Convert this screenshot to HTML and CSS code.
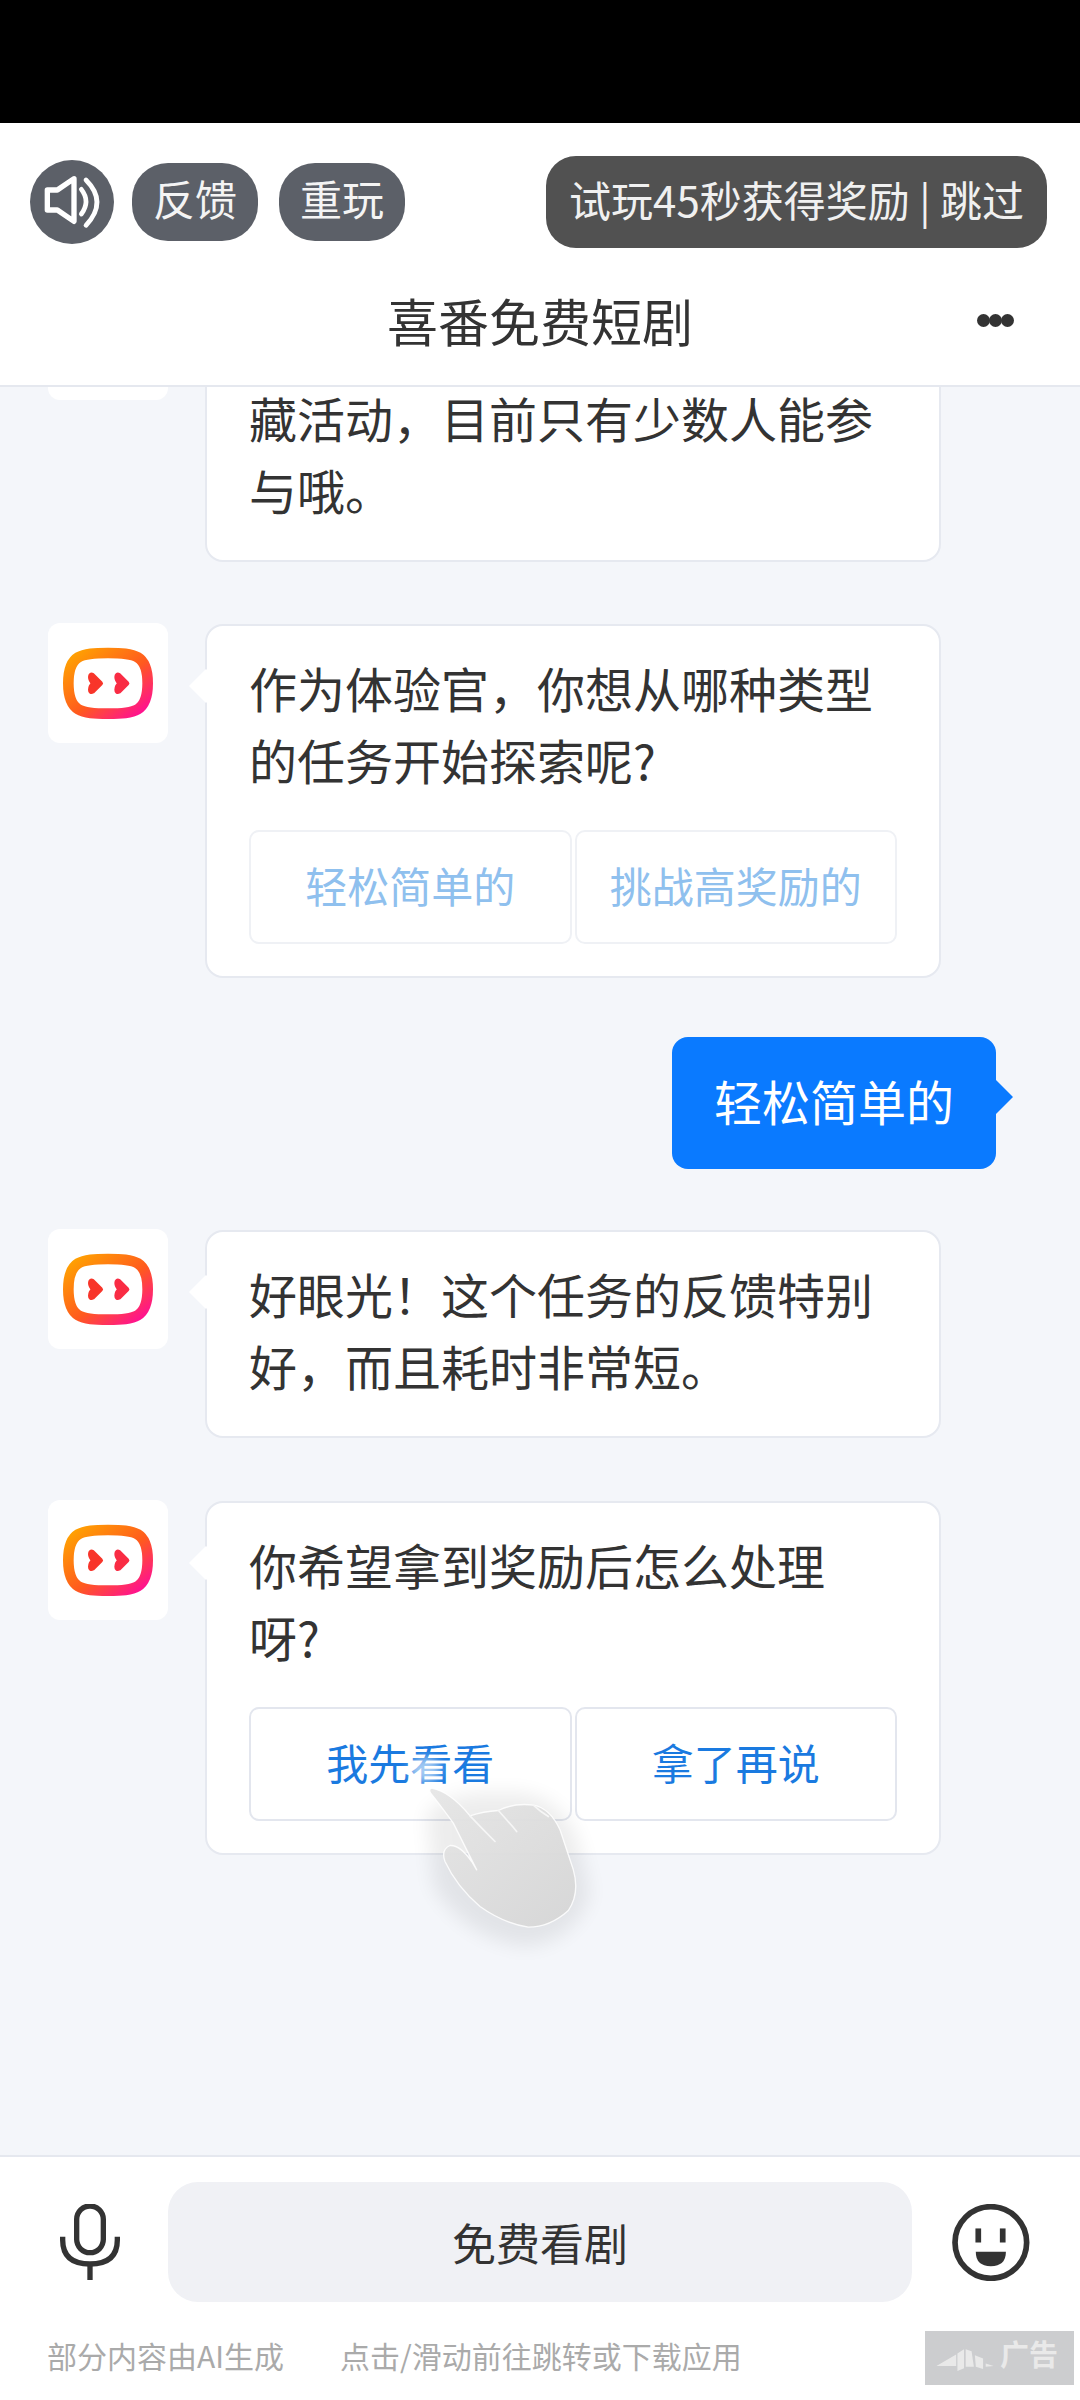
FILE: index.html
```html
<!DOCTYPE html>
<html lang="zh-CN">
<head>
    <meta charset="UTF-8">
    <meta name="viewport" content="width=device-width, initial-scale=1.0">
    <title>喜番免费短剧</title>
    <link rel="stylesheet" href="styles.css">
</head>
<body>
    <svg class="defs" width="0" height="0">
        <defs>
            <linearGradient id="logo-ring" x1="0" y1="0" x2="1" y2="1">
                <stop offset="0" stop-color="#ffa600"/>
                <stop offset="0.55" stop-color="#ff5a1e"/>
                <stop offset="1" stop-color="#ff0a9c"/>
            </linearGradient>
            <linearGradient id="hand-fill" x1="0" y1="0" x2="1" y2="1">
                <stop offset="0" stop-color="#e6e6e6"/>
                <stop offset="1" stop-color="#d6d6d6"/>
            </linearGradient>
            <symbol id="logo" viewBox="0 0 360 360">
                <path d="M180 90C260 90 299 95 299 181C299 267 260 272 180 272C100 272 61 267 61 181C61 95 100 90 180 90Z" fill="none" stroke="url(#logo-ring)" stroke-width="32"/>
                <path d="M158 181L134 157Q127 153 127 162Q127 172 137 181Q127 190 127 200Q127 209 134 205Z" fill="#f8352a" stroke="#f8352a" stroke-width="14" stroke-linejoin="round"/>
                <path d="M237 181L213 157Q206 153 206 162Q206 172 216 181Q206 190 206 200Q206 209 213 205Z" fill="#f92c44" stroke="#f92c44" stroke-width="14" stroke-linejoin="round"/>
            </symbol>
        </defs>
    </svg>

    <div class="screen">
        <div class="status-bar"></div>

        <header class="header">
            <div class="top-row">
                <div class="top-left">
                    <span class="sound-btn">
                        <svg viewBox="18 30 252 252" width="84" height="84">
                            <path d="M150 86L100 120H70V180H100L150 214Z" fill="none" stroke="#fff" stroke-width="16" stroke-linejoin="round"/>
                            <path d="M172 118Q200 154 172 192" fill="none" stroke="#fff" stroke-width="14" stroke-linecap="round"/>
                            <path d="M186 90Q252 156 186 226" fill="none" stroke="#fff" stroke-width="14" stroke-linecap="round"/>
                        </svg>
                    </span>
                    <span class="pill">反馈</span>
                    <span class="pill">重玩</span>
                </div>
                <span class="skip">试玩45秒获得奖励 | 跳过</span>
            </div>
            <div class="title-row">
                <span></span>
                <h1>喜番免费短剧</h1>
                <span class="more"><i></i><i></i><i></i></span>
            </div>
        </header>

        <main class="chat">
            <div class="row row-clipped">
                <div class="avatar"></div>
                <div class="card no-tail">藏活动，目前只有少数人能参<br>与哦。</div>
            </div>

            <div class="row">
                <div class="avatar"><svg width="120" height="120"><use href="#logo"/></svg></div>
                <div class="card">
                    作为体验官，你想从哪种类型<br>的任务开始探索呢?
                    <div class="options faded">
                        <span class="option">轻松简单的</span>
                        <span class="option">挑战高奖励的</span>
                    </div>
                </div>
            </div>

            <div class="row row-me">
                <div class="bubble">轻松简单的</div>
            </div>

            <div class="row">
                <div class="avatar"><svg width="120" height="120"><use href="#logo"/></svg></div>
                <div class="card">好眼光！这个任务的反馈特别<br>好，而且耗时非常短。</div>
            </div>

            <div class="row">
                <div class="avatar"><svg width="120" height="120"><use href="#logo"/></svg></div>
                <div class="card">
                    你希望拿到奖励后怎么处理<br>呀?
                    <div class="options">
                        <span class="option">我先看看</span>
                        <span class="option">拿了再说</span>
                    </div>
                </div>
            </div>
        </main>

        <footer class="footer">
            <div class="input-row">
                <svg class="mic" viewBox="60 42 180 228" width="60" height="76">
                    <rect x="110" y="48" width="80" height="140" rx="40" fill="none" stroke="#333" stroke-width="16"/>
                    <path d="M68 140V150Q68 222 150 222Q232 222 232 150V140" fill="none" stroke="#333" stroke-width="16"/>
                    <path d="M150 222V270" fill="none" stroke="#333" stroke-width="16"/>
                </svg>
                <div class="input-box">免费看剧</div>
                <svg class="smile" viewBox="35 40 233 230" width="78" height="77">
                    <circle cx="151" cy="155" r="107" fill="none" stroke="#333" stroke-width="17"/>
                    <rect x="105" y="113" width="17" height="42" fill="#333"/>
                    <rect x="178" y="113" width="17" height="42" fill="#333"/>
                    <path d="M106 183H196Q196 226 151 226Q106 226 106 183Z" fill="#333"/>
                </svg>
            </div>
            <div class="hint-row">
                <div class="hints">
                    <span>部分内容由AI生成</span>
                    <span>点击/滑动前往跳转或下载应用</span>
                </div>
                <div class="ad-badge">
                    <svg viewBox="36 45 174 70" width="58" height="23">
                        <path d="M36 100L96 65V100Z" fill="#e9e9e9"/>
                        <path d="M100 62L120 49V107L100 115Z" fill="#e9e9e9"/>
                        <path d="M125 49L143 55L150 102H125Z" fill="#e9e9e9"/>
                        <path d="M153 67L178 77V109L156 102Z" fill="#e9e9e9"/>
                        <path d="M186 92L210 100L186 102Z" fill="#e9e9e9"/>
                    </svg>
                    <span>广告</span>
                </div>
            </div>
        </footer>

        <svg class="hand" viewBox="600 280 600 560" width="200" height="187">
            <defs>
                <filter id="hand-blur" x="-30%" y="-30%" width="160%" height="160%">
                    <feGaussianBlur stdDeviation="28"/>
                </filter>
                <filter id="tip-blur" x="-50%" y="-50%" width="200%" height="200%">
                    <feGaussianBlur stdDeviation="14"/>
                </filter>
            </defs>
            <ellipse cx="675" cy="270" rx="48" ry="38" fill="#fff" opacity="0.6" filter="url(#tip-blur)"/>
            <path d="M680 400Q760 330 900 340Q1060 320 1130 470L1170 640Q1130 780 980 800Q800 780 700 620Z" fill="#000" opacity="0.07" filter="url(#hand-blur)"/>
            <path d="M695 325Q750 335 810 408Q850 395 895 392Q945 368 1000 376Q1050 385 1080 450L1120 570Q1140 640 1105 692Q1050 742 985 742Q910 730 840 680Q770 620 735 545Q722 510 750 497Q780 495 815 545L830 570Q800 510 760 430Q720 375 692 340Q685 328 695 325Z" fill="url(#hand-fill)" fill-opacity="0.95" stroke="#fff" stroke-opacity="0.85" stroke-width="4" stroke-linejoin="round"/>
            <path d="M810 408Q850 450 885 485M895 392Q925 425 950 455M1000 376Q1020 395 1045 410" fill="none" stroke="#f6f6f6" stroke-width="5" stroke-linecap="round"/>
        </svg>
    </div>
</body>
</html>
```

FILE: styles.css
```css
* {
    box-sizing: border-box;
}
body {
    margin: 0;
    font-family: "Noto Sans CJK SC", "Noto Sans", sans-serif;
    color: #333;
}
.defs {
    position: absolute;
}
.screen {
    position: relative;
    width: 1080px;
    height: 2400px;
    display: flex;
    flex-direction: column;
    overflow: hidden;
    background: #f4f6fa;
}
.status-bar {
    height: 123px;
    flex: none;
    background: #000;
}

/* header */
.header {
    flex: none;
    height: 264px;
    padding-top: 33px;
    background: #fff;
    border-bottom: 2px solid #e5e8ef;
}
.top-row {
    display: flex;
    justify-content: space-between;
    align-items: center;
    padding: 0 33px 0 30px;
}
.top-left {
    display: flex;
    align-items: center;
}
.sound-btn {
    width: 84px;
    height: 84px;
    margin-right: 18px;
    border-radius: 50%;
    background: #5c6068;
}
.sound-btn svg {
    display: block;
}
.pill {
    width: 126px;
    height: 78px;
    margin-right: 21px;
    border-radius: 36px;
    background: #5c6068;
    color: #f4f4f4;
    font-size: 42px;
    line-height: 70px;
    text-align: center;
}
.skip {
    width: 501px;
    height: 92px;
    border-radius: 30px;
    background: #515151;
    color: #f0f0f0;
    font-size: 42px;
    line-height: 85px;
    text-align: center;
    white-space: nowrap;
}
.title-row {
    display: grid;
    grid-template-columns: 1fr auto 1fr;
    align-items: center;
    height: 124px;
    margin-top: 10px;
    padding: 0 66px;
}
.title-row h1 {
    margin: 0;
    font-size: 51px;
    font-weight: 400;
}
.more {
    display: flex;
    justify-content: flex-end;
}
.more i {
    width: 13px;
    height: 13px;
    margin-left: -1px;
    border-radius: 50%;
    background: #333;
}

/* chat */
.chat {
    flex: 1;
    min-height: 0;
    overflow: hidden;
    display: flex;
    flex-direction: column;
    gap: 62px;
}
.row {
    display: flex;
    align-items: flex-start;
    gap: 37px;
    padding-left: 48px;
}
.row-clipped {
    margin-top: -107px;
    margin-bottom: -1px;
}
.row-clipped .card {
    padding-top: 98px;
    padding-bottom: 35px;
}
.row-me {
    justify-content: flex-end;
    padding-right: 84px;
    margin-top: -3px;
    margin-bottom: -2px;
}
.avatar {
    flex: none;
    width: 120px;
    height: 120px;
    border-radius: 12px;
    background: #fff;
}
.avatar svg {
    display: block;
}
.card {
    position: relative;
    width: 736px;
    margin-top: 1px;
    padding: 25px 42px 35px;
    border: 2px solid #e6e9f0;
    border-radius: 18px;
    background: #fff;
    font-size: 48px;
    line-height: 72px;
    white-space: nowrap;
}
.card::before {
    content: "";
    position: absolute;
    left: -13px;
    top: 48px;
    width: 24px;
    height: 24px;
    background: #fff;
    transform: rotate(45deg);
}
.no-tail::before {
    display: none;
}
.options {
    display: flex;
    gap: 3px;
    margin-top: 35px;
    margin-bottom: -3px;
}
.option {
    flex: 1;
    height: 114px;
    border: 2px solid #e3e6ee;
    border-radius: 10px;
    color: #1a7ae0;
    font-size: 42px;
    line-height: 106px;
    text-align: center;
}
.faded .option {
    border-color: #eff1f5;
    color: #8fc0ee;
}
.bubble {
    position: relative;
    width: 324px;
    height: 132px;
    border-radius: 16px;
    background: #0a7aff;
    color: #fff;
    font-size: 48px;
    line-height: 126px;
    text-align: center;
}
.bubble::after {
    content: "";
    position: absolute;
    right: -12px;
    top: 48px;
    width: 24px;
    height: 24px;
    background: #0a7aff;
    transform: rotate(45deg);
}

/* footer */
.footer {
    flex: none;
    height: 245px;
    background: #fff;
    border-top: 2px solid #e5e8ef;
}
.input-row {
    display: flex;
    align-items: center;
    padding: 25px 50px 0 60px;
}
.mic {
    flex: none;
    margin-right: 48px;
}
.smile {
    flex: none;
    margin-left: 40px;
}
.input-box {
    width: 744px;
    height: 120px;
    border-radius: 30px;
    background: #f0f1f5;
    font-size: 44px;
    line-height: 120px;
    text-align: center;
}
.hint-row {
    display: flex;
    justify-content: space-between;
    align-items: center;
    padding: 29px 6px 0 47px;
}
.hints {
    display: flex;
    gap: 56px;
    margin-top: -6px;
    color: #aaa;
    font-size: 30px;
    line-height: 44px;
}
.ad-badge {
    display: flex;
    align-items: center;
    gap: 6px;
    width: 149px;
    height: 54px;
    padding-left: 11px;
    background: #cccdcf;
    color: #e9e9e9;
    font-size: 29px;
    font-weight: 700;
    line-height: 40px;
}
.ad-badge span {
    margin-top: -10px;
}
.ad-badge svg {
    margin-top: 2px;
}

/* pointer over the option */
.hand {
    position: absolute;
    left: 400px;
    top: 1773px;
    overflow: visible;
}
```
